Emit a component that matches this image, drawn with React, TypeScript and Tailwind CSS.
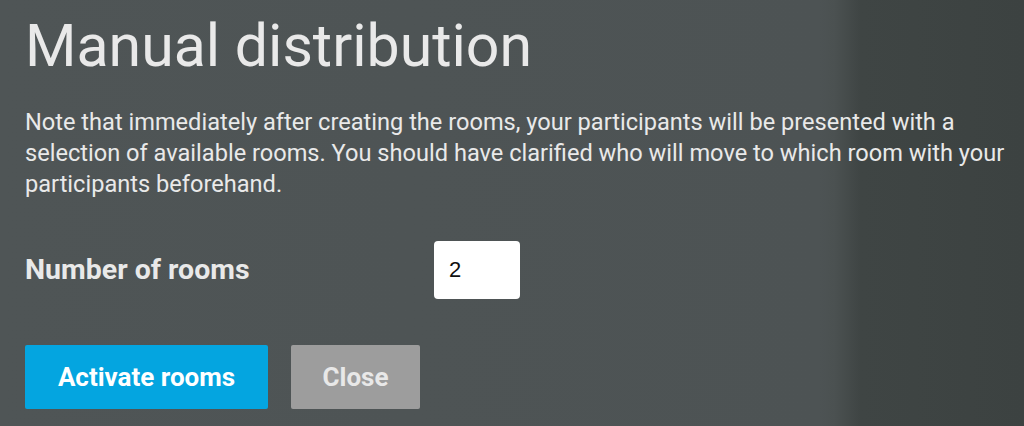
import React from "react";

export default function App() {
  return (
    <div
      className="w-[1024px] h-[426px] overflow-hidden text-[#e9e9e9] bg-[linear-gradient(90deg,#4f5556_0%,#4d5354_80%,#4b5151_81.5%,#3f4544_84%,#3c4241_100%)]"
      style={{ fontFamily: "Roboto, 'Liberation Sans', sans-serif" }}
    >
      <div className="pl-[25px] pt-[11px]">
        <h1 className="text-[59px] leading-[70px] font-normal">Manual distribution</h1>
        <p className="mt-[26px] w-[992px] text-[23.6px] leading-[31px]">
          Note that immediately after creating the rooms, your participants will be presented with a
          selection of available rooms. You should have clarified who will move to which room with your
          participants beforehand.
        </p>
        <div className="mt-[41px] flex items-center">
          <label className="w-[409px] text-[28.5px] font-bold">Number of rooms</label>
          <input
            type="text"
            defaultValue="2"
            className="w-[86px] h-[58px] rounded-[4px] bg-white px-[15px] text-[22px] text-[#111] outline-none"
            style={{ fontFamily: "'Liberation Sans', Arial, sans-serif" }}
          />
        </div>
        <div className="mt-[46px] flex gap-[23px]">
          <button className="w-[243px] h-[64px] rounded-[2px] bg-[#04a5e0] text-[26px] font-bold text-white">
            Activate rooms
          </button>
          <button className="w-[129px] h-[64px] rounded-[2px] bg-[#9d9d9d] text-[26px] font-bold text-[#e8e8e8]">
            Close
          </button>
        </div>
      </div>
    </div>
  );
}
